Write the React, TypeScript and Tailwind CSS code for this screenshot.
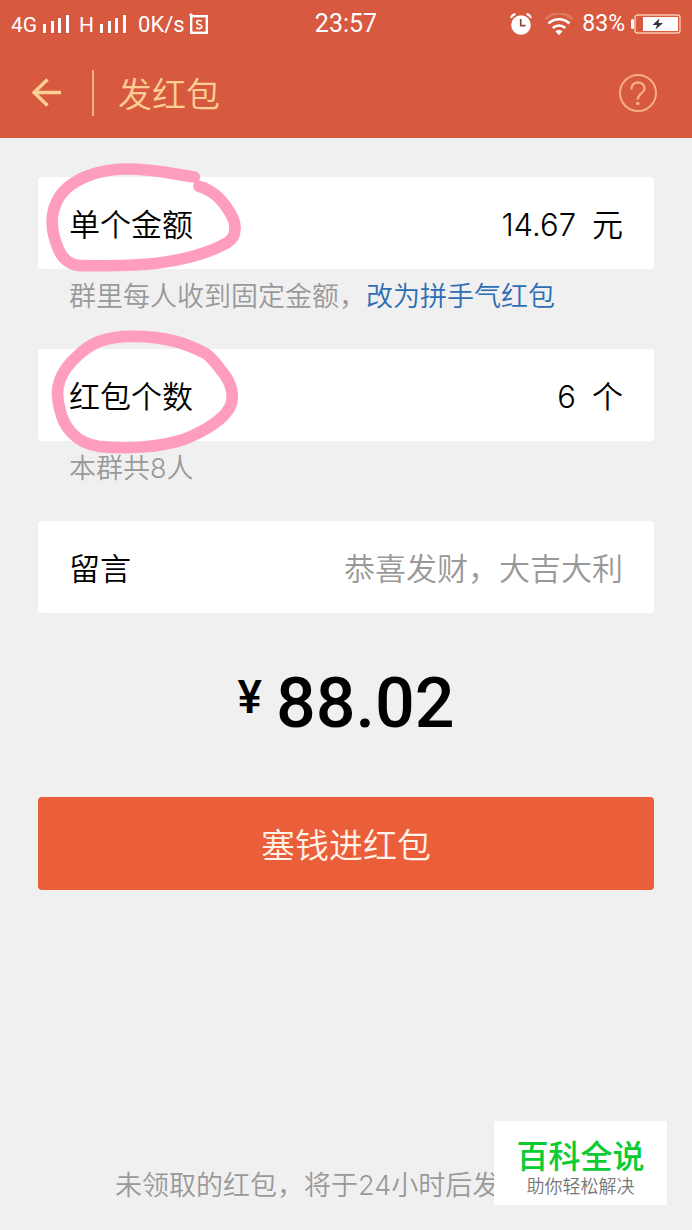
import { useState } from 'react';

const SIGNAL_BARS = [9, 12, 15, 18];

function SignalIcon() {
  return (
    <svg viewBox="0 0 26 18" className="h-[18px] w-[26px]" fill="currentColor">
      {SIGNAL_BARS.map((h, i) => (
        <rect key={h} x={i * 8 - (i > 1 ? 1 : 0)} y={18 - h} width="3" height={h} />
      ))}
    </svg>
  );
}

function SpeedIcon() {
  return (
    <svg viewBox="0 0 20 22" className="h-[22px] w-5" fill="none" stroke="currentColor">
      <rect x="2.2" y="3.2" width="15.6" height="16.6" strokeWidth="2.4" />
      <path d="M1 1l3 3" strokeWidth="3" />
      <path d="M12.8 8.4C11.8 7 7.6 7 7.6 9.5c0 2.6 5.2 1.3 5.2 4.1 0 2.6-4.5 2.6-5.6.9" strokeWidth="1.6" />
    </svg>
  );
}

function AlarmIcon() {
  return (
    <svg viewBox="0 0 22 22" className="h-[22px] w-[22px]">
      <circle cx="11" cy="12" r="9.8" fill="currentColor" />
      <path d="M1 5a6 6 0 0 1 4.5-4M21 5a6 6 0 0 0-4.5-4" fill="none" stroke="currentColor" strokeWidth="2" />
      <path d="M10.7 6v6.6h4.8" fill="none" stroke="#8a4a3c" strokeWidth="1.7" />
    </svg>
  );
}

function WifiIcon() {
  return (
    <svg viewBox="0 0 30 22" className="h-[22px] w-[30px]" fill="none" stroke="currentColor" strokeWidth="2.6">
      <path d="M1.5 6a19 19 0 0 1 27 0" opacity="0.2" />
      <path d="M4.5 10.5a15 15 0 0 1 21 0" />
      <path d="M8.8 15a9 9 0 0 1 12.4 0" />
      <path d="M11.5 18.5a5 5 0 0 1 7 0L15 22z" fill="currentColor" stroke="none" />
    </svg>
  );
}

function BatteryIcon() {
  return (
    <svg viewBox="0 0 50 20" className="h-5 w-[50px]">
      <path d="M1.5 6.5v7" stroke="currentColor" strokeWidth="3" strokeLinecap="round" />
      <rect x="4" y="1" width="45" height="18" rx="2.5" fill="none" stroke="#fbc9b4" strokeWidth="1.4" />
      <rect x="12" y="3" width="35" height="14" fill="currentColor" />
      <path d="M28.5 4.5L21.5 11h4.5l-1.5 4.5L32 9h-4.6z" fill="#35353f" />
    </svg>
  );
}

function StatusBar() {
  return (
    <div className="grid h-12 grid-cols-[1fr_auto_1fr] items-center px-[11px] font-[Roboto,sans-serif] text-white">
      <div className="flex items-center">
        <span className="mt-1 text-[21px]">4G</span>
        <span className="mr-[10px] ml-[6px]"><SignalIcon /></span>
        <span className="mt-1 text-[21px]">H</span>
        <span className="mr-3 ml-[6px]"><SignalIcon /></span>
        <span className="mr-1 text-[22px]">0K/s</span>
        <SpeedIcon />
      </div>
      <span className="text-[25px]">23:57</span>
      <div className="flex items-center justify-end">
        <AlarmIcon />
        <span className="mr-2 ml-3"><WifiIcon /></span>
        <span className="mr-[6px] text-[23px]">83%</span>
        <BatteryIcon />
      </div>
    </div>
  );
}

function NavBar() {
  return (
    <div className="flex h-[90px] items-center pr-[34px] pl-[30px] text-[#fdcf95]">
      <button type="button" aria-label="返回">
        <svg viewBox="0 0 32 30" className="h-[30px] w-8" fill="none" stroke="currentColor" strokeWidth="3.4">
          <path d="M31 14.5H4M17.500 1.500L4 14.500L17.500 27.500" />
        </svg>
      </button>
      <span className="mr-6 ml-[30px] h-[46px] w-[2px] bg-[#f5b27e]" />
      <h1 className="flex-1 pt-1 text-[34px] leading-[48px] font-[350]">发红包</h1>
      <button type="button" aria-label="帮助" className="text-[#f8b081]">
        <svg viewBox="0 0 40 40" className="h-10 w-10" fill="none" stroke="currentColor" strokeWidth="2">
          <circle cx="20" cy="20" r="18" />
          <path d="M13.500 16.500v-1c0-8 13-8 13 0 0 5-6.800 5-6.800 11" strokeWidth="2.4" />
          <circle cx="19.7" cy="30.5" r="1.8" fill="currentColor" stroke="none" />
        </svg>
      </button>
    </div>
  );
}

function PinkMark({ d }: { d: string }) {
  return (
    <svg
      viewBox="0 0 690 510"
      className="pointer-events-none absolute -top-7 -left-2 h-[170px] w-[230px]"
      fill="none"
      stroke="#ff9dbf"
      strokeWidth="35"
      strokeLinecap="round"
      strokeLinejoin="round"
    >
      <path d={d} />
    </svg>
  );
}

const AMOUNT_MARK =
  'M493 84C430 76 380 60 290 60C190 60 120 98 90 140C55 192 64 250 85 300C98 332 125 351 160 350C230 350 300 353 380 343C460 332 540 310 590 282C625 262 620 220 597 186C575 150 545 122 507 112';
const COUNT_MARK =
  'M528 98C470 68 410 46 310 46C220 45 180 70 145 102C85 156 72 203 90 266C102 322 140 366 205 376C290 386 390 378 460 356C520 332 575 302 599 260C615 228 605 185 575 150C560 130 548 112 528 98Z';

type FieldProps = {
  id: string;
  label: string;
  value: string;
  onChange: (v: string) => void;
  unit?: string;
  placeholder?: string;
  mark?: string;
};

function Field({ id, label, value, onChange, unit, placeholder, mark }: FieldProps) {
  return (
    <div className="relative flex h-[92px] items-center rounded-[4px] bg-white px-[31px] pt-1 text-[31px] font-[350] text-black">
      <label htmlFor={id} className="shrink-0">{label}</label>
      <input
        id={id}
        value={value}
        placeholder={placeholder}
        onChange={(e) => onChange(e.target.value)}
        className="min-w-0 flex-1 bg-transparent text-right outline-none placeholder:text-[#999999]"
      />
      {unit && <span className="ml-4">{unit}</span>}
      {mark && <PinkMark d={mark} />}
    </div>
  );
}

export default function App() {
  const [amount, setAmount] = useState('14.67');
  const [count, setCount] = useState('6');
  const [message, setMessage] = useState('');

  return (
    <div className="relative flex min-h-screen flex-col bg-[#f0f0f0] font-[Inter,'Noto_Sans_CJK_SC',sans-serif]">
      <header className="bg-[#d7593f]">
        <StatusBar />
        <NavBar />
      </header>

      <main className="flex flex-1 flex-col px-[38px] pt-[39px]">
        <Field id="amount" label="单个金额" value={amount} onChange={setAmount} unit="元" mark={AMOUNT_MARK} />
        <p className="mb-6 pl-[31px] text-[27px] leading-[56px] font-[350] text-[#999999]">
          群里每人收到固定金额，
          <a href="#" className="text-[#2d6db3]">改为拼手气红包</a>
        </p>

        <Field id="count" label="红包个数" value={count} onChange={setCount} unit="个" mark={COUNT_MARK} />
        <p className="mb-6 pl-[31px] text-[27px] leading-[56px] font-[350] text-[#999999]">本群共8人</p>

        <Field
          id="message"
          label="留言"
          value={message}
          onChange={setMessage}
          placeholder="恭喜发财，大吉大利"
        />

        {/* total */}
        <div className="mt-[50px] flex items-start justify-center gap-[14px] font-[Roboto,sans-serif] font-medium text-black">
          <span className="text-[46px] leading-[68px]">¥</span>
          <span className="text-[70px] leading-[80px]">88.02</span>
        </div>

        <button
          type="button"
          className="mt-[54px] h-[93px] rounded-[4px] bg-[#ea5f39] pt-1 text-[34px] font-[350] text-[#fff3ea]"
        >
          塞钱进红包
        </button>

        <p className="mt-auto pb-6 pl-[77px] text-[27px] leading-10 font-[350] text-[#999999]">
          未领取的红包，将于24小时后发
        </p>
      </main>

      {/* watermark */}
      <div className="absolute right-[25px] bottom-[25px] flex h-[84px] w-[173px] flex-col items-center justify-center bg-white pt-3">
        <span className="text-[32px] leading-9 font-medium text-[#09cc33]">百科全说</span>
        <span className="text-[18px] leading-6 font-[350] text-[#777777]">助你轻松解决</span>
      </div>
    </div>
  );
}
